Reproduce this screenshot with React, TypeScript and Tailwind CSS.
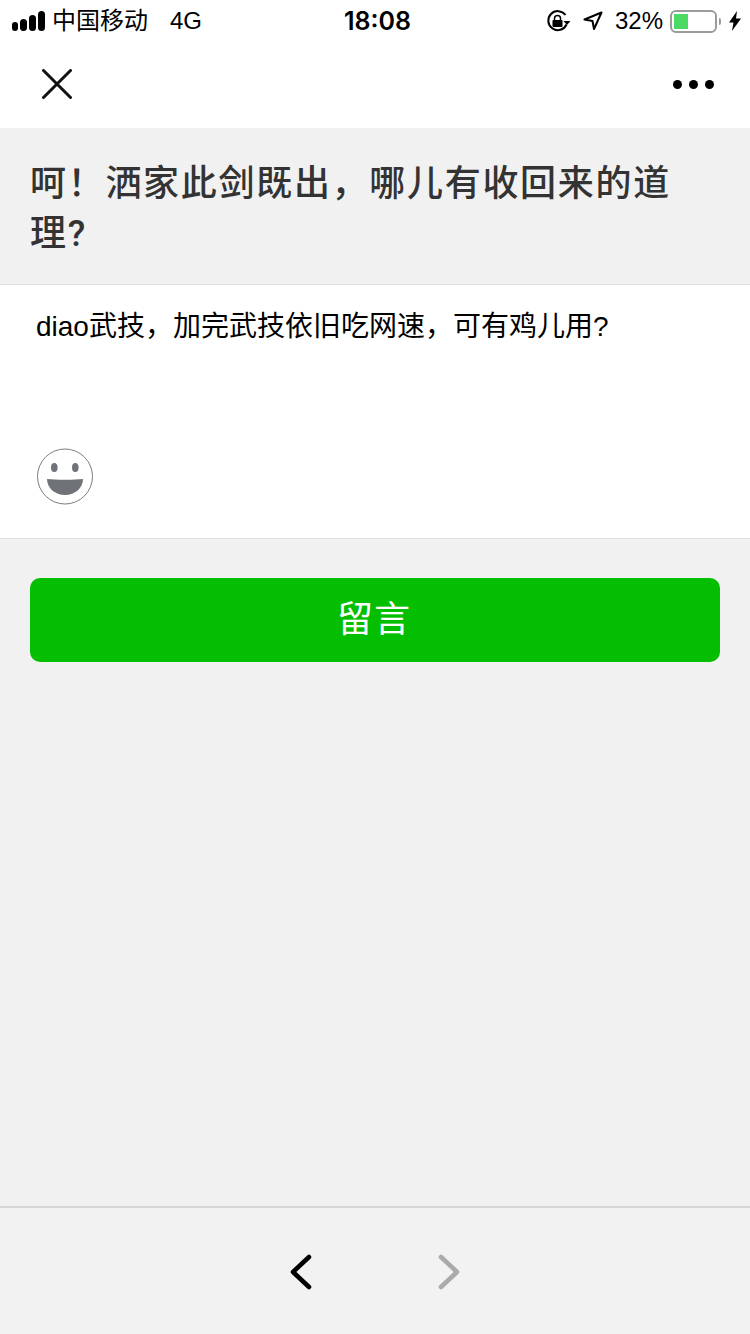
import React from "react";

const CJK = "font-['Liberation_Sans','Noto_Sans_CJK_SC',sans-serif]";

function StatusBar() {
  return (
    <div className="flex h-10 items-center justify-between bg-white pt-[2px] text-black">
      <div className="flex w-[260px] items-center pl-3">
        <div className="flex items-end gap-[2px]">
          <span className="h-[9px] w-[6px] rounded-full bg-black" />
          <span className="h-[12px] w-[7px] rounded-full bg-black" />
          <span className="h-[16px] w-[7px] rounded-full bg-black" />
          <span className="h-[20px] w-[7px] rounded-full bg-black" />
        </div>
        <span className="ml-[7px] text-[24px] leading-none">中国移动</span>
        <span className="ml-[22px] text-[24px] leading-none">4G</span>
      </div>
      <span className="ml-[5px] font-['Inter',sans-serif] text-[25px] leading-none font-semibold">18:08</span>
      <div className="flex w-[260px] items-center justify-end pr-[9px]">
        <svg width="26" height="24" viewBox="0 0 26 24" fill="none">
          <path d="M20.500 15.500A9.500 9.500 0 1 1 19.500 6" stroke="#000" strokeWidth="2" />
          <path d="M17.500 12h7l-3.500 4z" fill="#000" />
          <rect x="6.500" y="11" width="10" height="7" rx="1" fill="#000" />
          <path d="M8.500 11V9.500a3 3 0 0 1 6 0V11" stroke="#000" strokeWidth="1.500" />
        </svg>
        <svg className="ml-[11px]" width="20" height="20" viewBox="0 0 20 20" fill="none">
          <path d="M18.500 1.500 1.500 8.500l8 1.500 1.500 8z" stroke="#000" strokeWidth="2" strokeLinejoin="round" />
        </svg>
        <span className="ml-[12px] text-[24px] leading-none">32%</span>
        <div className="ml-[7px] flex h-[23px] w-[47px] items-center rounded-[6px] border-2 border-[#9b9b9b] p-[2px]">
          <div className="h-[15px] w-[14px] bg-[#4cd964]" />
        </div>
        <span className="ml-[2px] h-[7px] w-[2px] rounded-r-full bg-[#9b9b9b]" />
        <svg className="ml-[8px]" width="12" height="20" viewBox="0 0 12 20">
          <path d="M8 0 0 11.500h4.500L3 20l9-12.500H7z" fill="#000" />
        </svg>
      </div>
    </div>
  );
}

function NavBar() {
  return (
    <div className="flex h-[88px] items-center justify-between bg-white pr-[36px] pl-[42px]">
      <svg width="30" height="30" viewBox="0 0 30 30" fill="none">
        <path d="M1.500 1.500 28.500 28.500M28.500 1.500 1.500 28.500" stroke="#111" strokeWidth="3" strokeLinecap="round" />
      </svg>
      <div className="flex gap-[7px]">
        <span className="size-[9px] rounded-full bg-black" />
        <span className="size-[9px] rounded-full bg-black" />
        <span className="size-[9px] rounded-full bg-black" />
      </div>
    </div>
  );
}

function SmileIcon() {
  return (
    <svg width="58" height="58" viewBox="0 0 58 58" fill="none">
      <circle cx="29" cy="28.500" r="27.500" fill="#fff" stroke="#7c7d80" strokeWidth="1" />
      <ellipse cx="18.300" cy="19.500" rx="3.300" ry="4.500" fill="#6f7378" />
      <ellipse cx="39.300" cy="19.500" rx="3.300" ry="4.500" fill="#6f7378" />
      <path d="M11 31c8 1 28 1 36 0 0 9-8 16-18 16S11 40 11 31z" fill="#6f7378" />
    </svg>
  );
}

export default function App() {
  return (
    <div className={`flex h-[1334px] w-[750px] flex-col bg-[#f1f1f1] ${CJK}`}>
      <StatusBar />
      <NavBar />
      <div className="h-[157px] border-b border-[#e0e0e0] px-[30px] pt-[31px]">
        <h1 className="text-[36px] leading-[50px] font-medium tracking-[1.700px] text-[#333]">
          呵！洒家此剑既出，哪儿有收回来的道理<span className="font-['Roboto',sans-serif]">?</span>
        </h1>
      </div>
      <div className="flex h-[254px] flex-col justify-between border-b border-[#e0e0e0] bg-white pr-[30px] pb-[32px] pl-[36px]">
        <p className="pt-[22px] text-[28px] leading-[40px] text-black">
          diao武技，加完武技依旧吃网速，可有鸡儿用?
        </p>
        <SmileIcon />
      </div>
      <div className="px-[30px] pt-[39px]">
        <button className="h-[84px] w-full rounded-[10px] bg-[#04be02] pr-[2px] text-[36px] tracking-[1px] text-white">
          留言
        </button>
      </div>
      <div className="mt-auto flex h-[128px] items-center justify-center gap-[124px] border-t-2 border-[#d5d5d5] bg-[#f2f2f2] pt-[2px]">
        <svg width="24" height="36" viewBox="0 0 24 36" fill="none">
          <path d="M20 3 4 18l16 15" stroke="#000" strokeWidth="4.500" strokeLinecap="round" strokeLinejoin="round" />
        </svg>
        <svg width="24" height="36" viewBox="0 0 24 36" fill="none">
          <path d="M4 3l16 15L4 33" stroke="#aaa" strokeWidth="4.500" strokeLinecap="round" strokeLinejoin="round" />
        </svg>
      </div>
    </div>
  );
}
